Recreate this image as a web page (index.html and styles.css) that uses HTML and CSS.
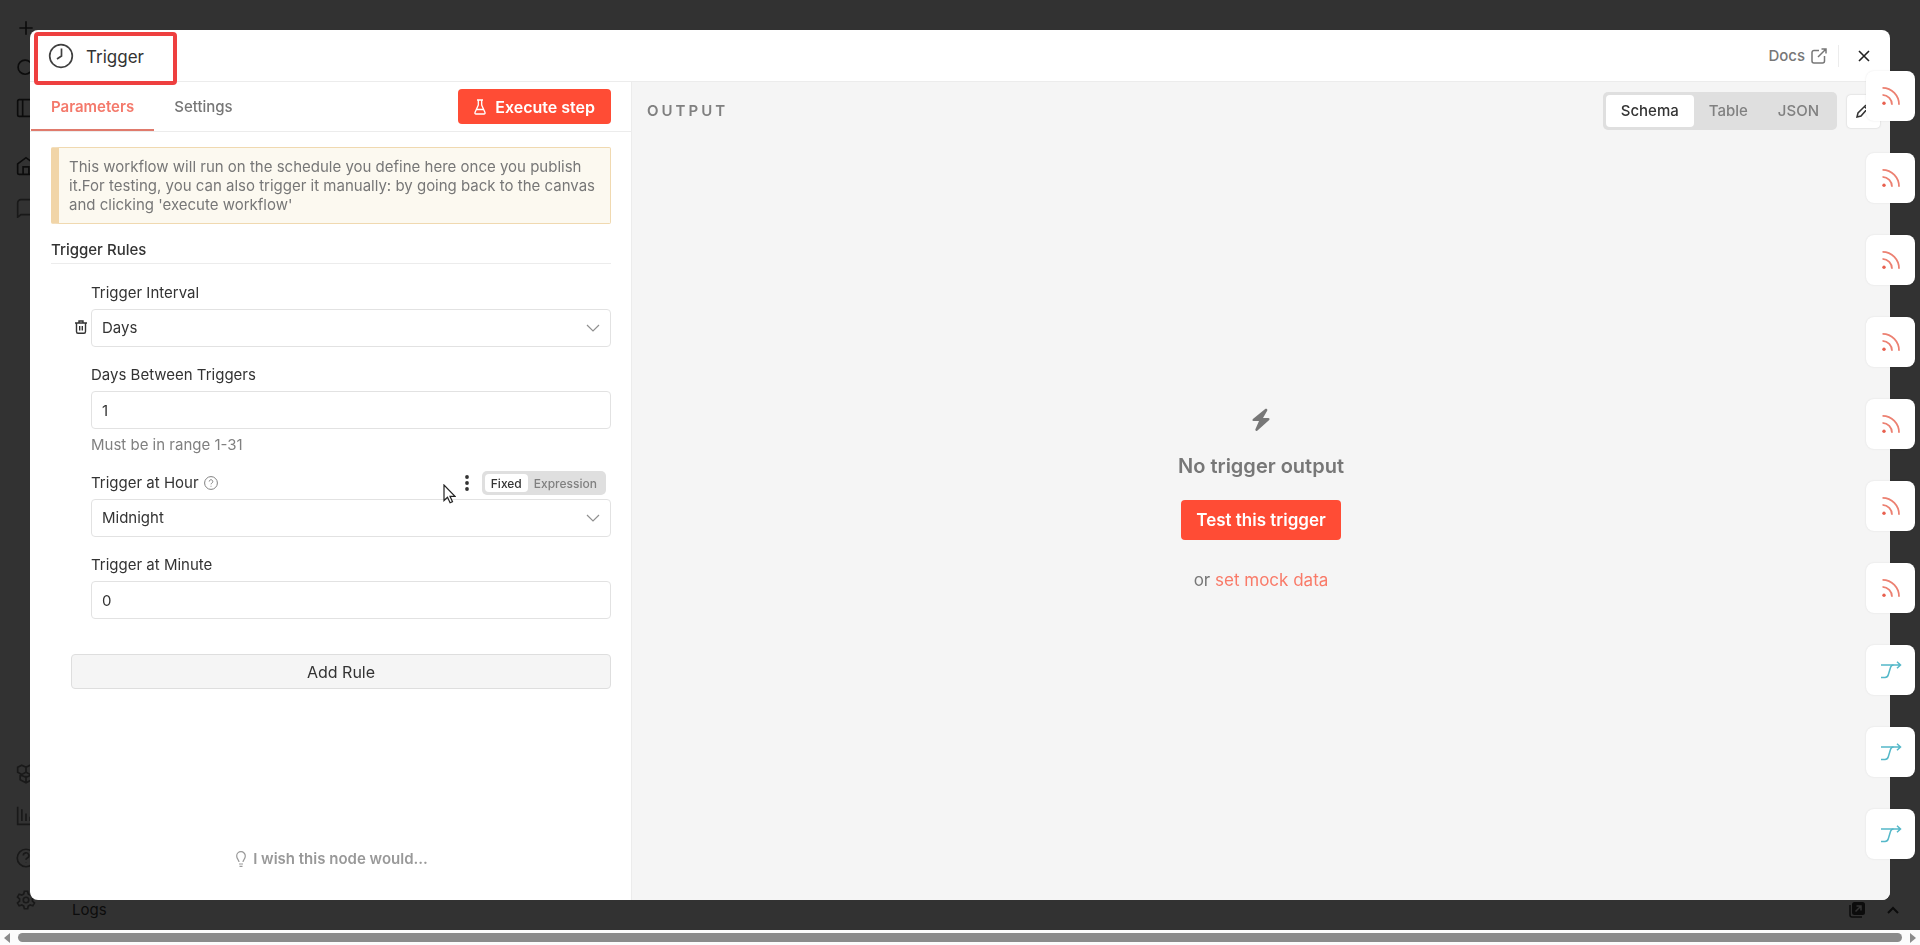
FILE: index.html
```
<!DOCTYPE html>
<html lang="en">
<head>
    <meta charset="UTF-8">
    <meta name="viewport" content="width=device-width, initial-scale=1.0">
    <title>Trigger</title>
    <link rel="stylesheet" href="styles.css">
</head>
<body>
    <!-- shared icons -->
    <svg class="sprite" aria-hidden="true">
        <symbol id="rss" viewBox="0 0 20 20">
            <g fill="none" stroke="#ec8071" stroke-width="1.8">
                <path d="M1.500 1.800A16.500 16.500 0 0 1 18 18.800"/>
                <path d="M1.500 8.800A9.800 9.800 0 0 1 11 18.800"/>
            </g>
            <circle cx="3" cy="17.200" r="1.700" fill="#e8604f"/>
        </symbol>
        <symbol id="merge" viewBox="0 0 22 18">
            <g fill="none" stroke="#54b8c9" stroke-width="1.500">
                <path d="M1 4h19.500M17 .8 20.500 4 17 7.200"/>
                <path d="M1 16.500h4c2 0 2.800-1 3.300-2.700L10.500 6.500c.4-1.400 1-2.500 3-2.500"/>
            </g>
        </symbol>
        <symbol id="chevron" viewBox="0 0 14 8">
            <path d="M1 1l6 6 6-6" fill="none" stroke="#909090" stroke-width="1.200"/>
        </symbol>
    </svg>

    <div class="app">
        <div class="workspace">
            <nav class="sidebar">
                <div class="nav-group">
                    <svg class="nav-icon" viewBox="0 0 24 24"><path d="M4 12h16M12 4v16"/></svg>
                    <svg class="nav-icon" viewBox="0 0 24 24"><circle cx="11" cy="11" r="8.500"/><path d="M22 22l-5-5"/></svg>
                    <svg class="nav-icon" viewBox="0 0 24 24"><rect x="2" y="2" width="20" height="20" rx="2"/><path d="M8 2v20"/></svg>
                </div>
                <div class="nav-group nav-projects">
                    <svg class="nav-icon" viewBox="0 0 24 24"><path d="M2 9.500 12 2l10 7.500V20a2 2 0 0 1-2 2H4a2 2 0 0 1-2-2zM8.500 22v-9h7v9"/></svg>
                    <svg class="nav-icon dim" viewBox="0 0 24 24"><path d="M6 2h12a4 4 0 0 1 4 4v10a4 4 0 0 1-4 4H6l-4 3V6a4 4 0 0 1 4-4z"/></svg>
                </div>
                <div class="nav-group nav-bottom">
                    <svg class="nav-icon dim" viewBox="0 0 24 24"><path d="M7 1.500 12 4v6L7 12.500 2 10V4zM17 1.500 22 4v6l-5 2.500L12 10V4zM5 13v6l7 3.500 7-3.500v-6M12 14v8M5 13l7 3 7-3"/></svg>
                    <svg class="nav-icon dim" viewBox="0 0 24 24"><path d="M2 1v21h21M7 4v14M12 9v9M17 13v5"/></svg>
                    <svg class="nav-icon dim" viewBox="0 0 24 24"><circle cx="12" cy="12" r="10.500"/><path d="M8.800 9a3.300 3.300 0 1 1 4.800 3c-1 .5-1.600 1-1.600 2M12 17v.5"/></svg>
                    <svg class="nav-icon dim" viewBox="0 0 24 24"><path d="M10 1.500h4l.7 3.200 2.300 1.300 3.200-1 2 3.500-2.500 2.200v2.600l2.500 2.200-2 3.500-3.200-1-2.300 1.300-.7 3.200h-4l-.7-3.200L7 18l-3.200 1-2-3.500 2.500-2.200v-2.600L1.800 8.500l2-3.500L7 6l2.300-1.300z"/><circle cx="12" cy="12" r="3.300"/></svg>
                </div>
            </nav>
            <footer class="logs">
                <span>Logs</span>
                <span class="logs-actions">
                    <svg width="16" height="16" viewBox="0 0 16 16"><rect x="3" y="0" width="13" height="13" rx="2.500"/><path d="M1 3v10a2 2 0 0 0 2 2h10" fill="none" stroke="#0c0c0c" stroke-width="1.500"/><path d="M6.500 9.500 12 4M7.500 4H12v4.500" fill="none" stroke="#333" stroke-width="1.500"/></svg>
                    <svg width="12" height="8" viewBox="0 0 12 8"><path d="M1 7l5-5 5 5" fill="none" stroke="#0c0c0c" stroke-width="2"/></svg>
                </span>
            </footer>
        </div>
        <div class="scrollbar">
            <span class="arrow arrow-left"></span>
            <span class="thumb"></span>
            <span class="arrow arrow-right"></span>
        </div>
    </div>

    <main class="modal">
        <header class="modal-header">
            <svg class="clock" width="26" height="26" viewBox="0 0 26 26"><circle cx="13" cy="13" r="11.300"/><path d="M13.500 5.500V13l-4.500 3"/></svg>
            <h1>Trigger</h1>
            <a class="docs" href="#">Docs
                <svg width="16" height="16" viewBox="0 0 16 16"><path d="M8 2.500H3a2 2 0 0 0-2 2V13a2 2 0 0 0 2 2h8.500a2 2 0 0 0 2-2V8M10.500 1H15v4.500M15 1 7 9"/></svg>
            </a>
            <button class="close" aria-label="Close">
                <svg width="12" height="12" viewBox="0 0 12 12"><path d="M1 1l10 10M11 1 1 11"/></svg>
            </button>
        </header>

        <div class="panels">
            <section class="params">
                <div class="tabs">
                    <button class="tab active">Parameters</button>
                    <button class="tab">Settings</button>
                    <button class="execute">
                        <svg width="12" height="16" viewBox="0 0 12 16"><path d="M3 1h6M4.300 1v5L1 13.500Q.6 15 2 15h8q1.400 0 1-1.500L7.700 6V1M2.500 10.500h7"/></svg>
                        Execute step
                    </button>
                </div>

                <div class="params-body">
                    <p class="notice">This workflow will run on the schedule you define here once you publish it.For testing, you can also trigger it manually: by going back to the canvas and clicking 'execute workflow'</p>

                    <h2>Trigger Rules</h2>

                    <div class="rule">
                        <div class="field">
                            <label for="interval">Trigger Interval</label>
                            <div class="select-wrap">
                                <select id="interval"><option>Days</option></select>
                                <svg class="chevron"><use href="#chevron"/></svg>
                                <button class="delete" aria-label="Delete rule">
                                    <svg width="12" height="14" viewBox="0 0 12 14"><path d="M0 3h12M4 3V1h4v2M1.500 3v8.500q0 1.800 1.500 1.800h6q1.500 0 1.500-1.800V3M4.700 6v4.500M7.300 6v4.500"/></svg>
                                </button>
                            </div>
                        </div>
                        <div class="field">
                            <label for="days">Days Between Triggers</label>
                            <input type="text" id="days" value="1">
                            <p class="hint">Must be in range 1-31</p>
                        </div>
                        <div class="field">
                            <div class="label-row">
                                <label for="hour">Trigger at Hour</label>
                                <svg class="help" width="14" height="14" viewBox="0 0 14 14"><circle cx="7" cy="7" r="6.400"/><path d="M5.200 5.500a1.800 1.800 0 1 1 2.700 1.600c-.6.300-.9.600-.9 1.200M7 9.800v.8"/></svg>
                                <button class="dots" aria-label="Options"><svg width="4" height="16" viewBox="0 0 4 16"><circle cx="2" cy="2" r="1.900"/><circle cx="2" cy="8" r="1.900"/><circle cx="2" cy="14" r="1.900"/></svg></button>
                                <div class="toggle small">
                                    <button class="on">Fixed</button>
                                    <button>Expression</button>
                                </div>
                            </div>
                            <div class="select-wrap">
                                <select id="hour"><option>Midnight</option></select>
                                <svg class="chevron"><use href="#chevron"/></svg>
                            </div>
                        </div>
                        <div class="field">
                            <label for="minute">Trigger at Minute</label>
                            <input type="text" id="minute" value="0">
                        </div>
                    </div>

                    <button class="add-rule">Add Rule</button>
                </div>

                <a class="wish" href="#">
                    <svg width="10" height="16" viewBox="0 0 10 16"><path d="M3 11c0-2-2.300-3-2.300-6a4.300 4.300 0 0 1 8.600 0c0 3-2.300 4-2.300 6M3 13h4M3.500 15.300h3"/></svg>
                    I wish this node would...
                </a>
            </section>

            <section class="output">
                <div class="output-header">
                    <span class="output-title">OUTPUT</span>
                    <div class="toggle">
                        <button class="on">Schema</button>
                        <button>Table</button>
                        <button>JSON</button>
                    </div>
                    <button class="edit" aria-label="Edit output">
                        <svg width="14" height="14" viewBox="0 0 14 14"><path d="M1 13l1-4 7.500-7.500q1.500-1 2.500 0t0 2.500L5 12zM8.500 2.500l3 3"/></svg>
                    </button>
                </div>
                <div class="empty">
                    <svg width="18" height="24" viewBox="0 0 18 24"><path d="M13.500.800.900 11Q-.3 13 1.500 13H7L3.300 21.500q0 2 1.900 1.300L17.200 12q1-2-1-2H11L15.300 2.500Q15.500.2 13.500.800z"/></svg>
                    <h3>No trigger output</h3>
                    <button class="test">Test this trigger</button>
                    <p>or <a href="#">set mock data</a></p>
                </div>
            </section>
        </div>
    </main>

    <div class="nodes">
        <button class="node" aria-label="RSS"><svg class="rss"><use href="#rss"/></svg></button>
        <button class="node" aria-label="RSS"><svg class="rss"><use href="#rss"/></svg></button>
        <button class="node" aria-label="RSS"><svg class="rss"><use href="#rss"/></svg></button>
        <button class="node" aria-label="RSS"><svg class="rss"><use href="#rss"/></svg></button>
        <button class="node" aria-label="RSS"><svg class="rss"><use href="#rss"/></svg></button>
        <button class="node" aria-label="RSS"><svg class="rss"><use href="#rss"/></svg></button>
        <button class="node" aria-label="RSS"><svg class="rss"><use href="#rss"/></svg></button>
        <button class="node" aria-label="Merge"><svg class="merge"><use href="#merge"/></svg></button>
        <button class="node" aria-label="Merge"><svg class="merge"><use href="#merge"/></svg></button>
        <button class="node" aria-label="Merge"><svg class="merge"><use href="#merge"/></svg></button>
    </div>

    <div class="highlight"></div>
    <svg class="cursor" width="13" height="20" viewBox="0 0 13 20"><path d="M1 1v15.500l3.500-3.300 2.600 5.600 2.400-1.100-2.500-5.400H12z"/></svg>
</body>
</html>
```

FILE: styles.css
```
* {
    margin: 0;
    padding: 0;
    box-sizing: border-box;
}

body {
    font-family: Inter, sans-serif;
    font-size: 15px;
    line-height: 20px;
    color: #333;
    background: #323232;
}

button, input, select {
    font: inherit;
    color: inherit;
}

button {
    border: none;
    background: none;
    cursor: pointer;
}

a {
    text-decoration: none;
}

svg {
    display: block;
    flex: none;
}

.sprite {
    position: absolute;
    width: 0;
    height: 0;
}

/* dimmed page behind the dialog */
.app {
    height: 100vh;
    display: flex;
    flex-direction: column;
}

.workspace {
    flex: 1;
    display: flex;
}

.sidebar {
    width: 52px;
    padding: 18px 16px 20px;
    display: flex;
    flex-direction: column;
}

.nav-group {
    display: flex;
    flex-direction: column;
    gap: 20px;
}

.nav-projects {
    margin-top: 38px;
    gap: 22px;
}

.nav-bottom {
    margin-top: auto;
    gap: 22px;
}

.nav-icon {
    width: 20px;
    height: 20px;
    fill: none;
    stroke: #0c0c0c;
    stroke-width: 2;
}

.nav-icon.dim {
    stroke: #191919;
}

.logs {
    flex: 1;
    align-self: flex-end;
    display: flex;
    justify-content: space-between;
    padding: 0 21px 10px 20px;
    color: #0c0c0c;
}

.logs-actions {
    display: flex;
    align-items: center;
    gap: 22px;
    fill: #0c0c0c;
}

.scrollbar {
    height: 15px;
    padding: 0 4px;
    background: #fcfcfc;
    display: flex;
    align-items: center;
    gap: 8px;
}

.thumb {
    flex: 1;
    height: 9px;
    border-radius: 5px;
    background: #8b8b8b;
}

.arrow {
    border: 5px solid transparent;
}

.arrow-left {
    border-right: 6px solid #8b8b8b;
    border-left: 0;
}

.arrow-right {
    border-left: 6px solid #8b8b8b;
    border-right: 0;
}

/* dialog */
.modal {
    position: fixed;
    inset: 30px 30px 45px;
    display: flex;
    flex-direction: column;
    background: #fff;
    border-radius: 8px;
    overflow: hidden;
}

.modal-header {
    height: 52px;
    padding: 0 20px 0 18px;
    border-bottom: 1px solid #ececec;
    display: flex;
    align-items: center;
}

.clock {
    fill: none;
    stroke: #404040;
    stroke-width: 1.7;
}

.modal-header h1 {
    margin-left: 12px;
    padding-top: 2px;
    font-size: 17px;
    font-weight: 400;
}

.docs {
    margin-left: auto;
    height: 22px;
    padding-right: 11px;
    border-right: 1px solid #ececec;
    display: flex;
    align-items: center;
    gap: 6px;
    font-weight: 500;
    color: #777;
}

.docs svg {
    fill: none;
    stroke: #777;
    stroke-width: 1.5;
}

.close {
    margin-left: 19px;
}

.close svg {
    stroke: #222;
    stroke-width: 1.6;
}

.panels {
    flex: 1;
    display: grid;
    grid-template-columns: 602fr 1258fr;
}

.params {
    display: flex;
    flex-direction: column;
    border-right: 1px solid #ececec;
}

.tabs {
    height: 50px;
    padding: 0 20px 0 1px;
    border-bottom: 1px solid #ececec;
    display: flex;
    align-items: center;
}

.tab {
    height: 49px;
    padding: 2px 20px 0;
    border-bottom: 2px solid transparent;
    font-weight: 500;
    color: #777;
}

.tab.active {
    border-color: #e07a6c;
    font-weight: 600;
    color: #f4796b;
}

.execute {
    margin-left: auto;
    height: 35px;
    padding: 0 16px;
    border-radius: 4px;
    background: #ff4c35;
    display: flex;
    align-items: center;
    gap: 9px;
    font-size: 16px;
    font-weight: 600;
    color: #fff;
}

.execute svg {
    fill: none;
    stroke: #fff;
    stroke-width: 1.3;
}

.params-body {
    padding: 15px 20px 0 21px;
}

.notice {
    padding: 9px 10px;
    border: 1px solid #f0d9b0;
    border-left: 8px solid #f1d5a8;
    border-radius: 2px;
    background: #fcf9f0;
    line-height: 19px;
    color: #777;
}

.params-body h2 {
    margin-top: 16px;
    padding-bottom: 3px;
    border-bottom: 1px solid #ececec;
    font-size: 15px;
    font-weight: 500;
}

.rule {
    margin: 19px 0 35px 40px;
    display: flex;
    flex-direction: column;
    gap: 18px;
}

.field {
    display: flex;
    flex-direction: column;
    gap: 6px;
}

.label-row {
    height: 20px;
    display: flex;
    align-items: center;
}

.field input,
.field select {
    width: 100%;
    height: 38px;
    padding: 0 10px;
    border: 1px solid #e2e2e2;
    border-radius: 4px;
    background: #fff;
    appearance: none;
}

.select-wrap {
    position: relative;
}

.chevron {
    position: absolute;
    top: 15px;
    right: 11px;
    width: 14px;
    height: 8px;
    pointer-events: none;
}

.delete {
    position: absolute;
    top: 11px;
    left: -16px;
}

.delete svg {
    fill: none;
    stroke: #333;
    stroke-width: 1.4;
}

.hint {
    color: #808080;
}

.help {
    margin-left: 5px;
    fill: none;
    stroke: #808080;
}

.dots {
    margin-left: auto;
    margin-right: 13px;
    fill: #333;
}

.toggle {
    padding: 3px;
    border-radius: 5px;
    background: #dfdfdf;
    display: flex;
    font-weight: 500;
    color: #808080;
}

.toggle button {
    height: 32px;
    padding: 0 15px;
    border-radius: 4px;
}

.toggle .on {
    background: #fff;
    color: #333;
}

.toggle.small {
    margin-right: 5px;
    font-size: 12px;
}

.toggle.small button {
    height: 18px;
    padding: 0 6px;
}

.add-rule {
    display: block;
    width: calc(100% - 20px);
    height: 35px;
    margin-left: 20px;
    border: 1px solid #dedede;
    border-radius: 4px;
    background: #f5f5f5;
    font-size: 16px;
}

.wish {
    margin: auto auto 31px;
    padding-left: 3px;
    display: flex;
    align-items: center;
    gap: 7px;
    font-weight: 600;
    color: #999;
}

.wish svg {
    fill: none;
    stroke: #999;
    stroke-width: 1.2;
}

/* output side */
.output {
    display: flex;
    flex-direction: column;
    background: #f5f5f5;
}

.output-header {
    padding: 10px 10px 0 15px;
    display: flex;
    align-items: center;
}

.output-title {
    margin-right: auto;
    font-weight: 600;
    letter-spacing: 3px;
    color: #808080;
}

.edit {
    width: 33px;
    height: 33px;
    margin-left: 10px;
    padding-left: 9px;
    border-radius: 4px;
    background: #fff;
    box-shadow: 0 0 2px rgba(0, 0, 0, 0.2);
}

.edit svg {
    fill: none;
    stroke: #333;
    stroke-width: 1.5;
}

.empty {
    flex: 1;
    padding-bottom: 30px;
    display: flex;
    flex-direction: column;
    align-items: center;
    justify-content: center;
    font-size: 17px;
    line-height: 24px;
    color: #777;
}

.empty > svg {
    fill: #777;
}

.empty h3 {
    margin: 22px 0;
    font-size: 20px;
    font-weight: 600;
}

.test {
    height: 40px;
    padding: 0 15px;
    border-radius: 4px;
    background: #ff4c35;
    font-weight: 600;
    color: #fff;
}

.empty p {
    margin-top: 28px;
}

.empty a {
    color: #f97a68;
}

/* connected nodes, floating over the dialog edge */
.nodes {
    position: fixed;
    top: 71px;
    right: 5px;
    display: flex;
    flex-direction: column;
    gap: 32px;
}

.node {
    width: 49px;
    height: 50px;
    border-radius: 8px;
    background: #fff;
    box-shadow: 0 0 2px rgba(0, 0, 0, 0.1);
    display: flex;
    align-items: center;
    justify-content: center;
}

.rss {
    width: 20px;
    height: 20px;
}

.merge {
    width: 22px;
    height: 18px;
}

.highlight {
    position: fixed;
    top: 32px;
    left: 34px;
    width: 143px;
    height: 53px;
    border: 4px solid #ee3f3f;
    border-radius: 4px;
    pointer-events: none;
}

.cursor {
    position: fixed;
    top: 484px;
    left: 443px;
    fill: #fff;
    stroke: #222;
    stroke-width: 1.2;
    pointer-events: none;
}
```
